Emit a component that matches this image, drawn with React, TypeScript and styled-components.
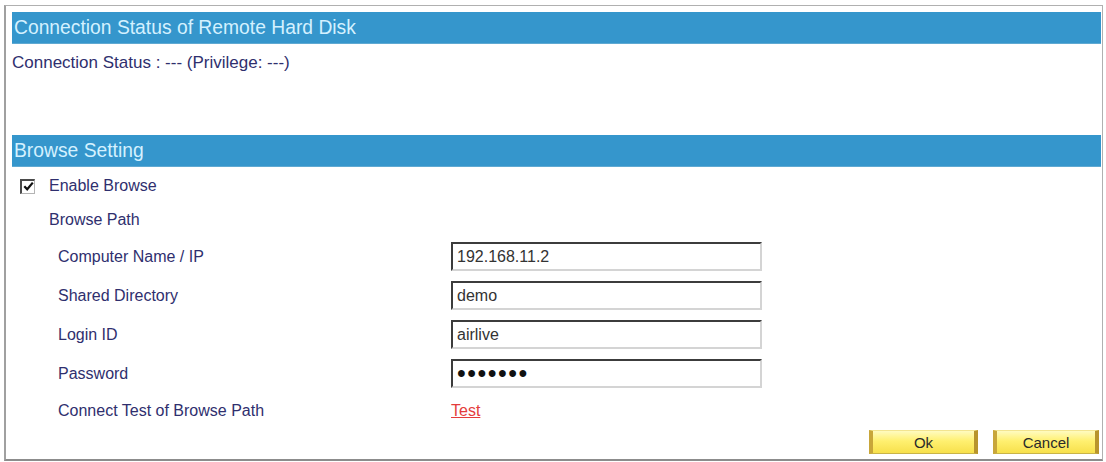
import styled, { createGlobalStyle } from 'styled-components';

const GlobalStyle = createGlobalStyle`
  html, body {
    margin: 0;
    padding: 0;
    background: #ffffff;
  }
  body {
    font-family: 'Liberation Sans', Arial, sans-serif;
  }
`;

interface Field {
  label: string;
  value: string;
  secret?: boolean;
}

const fields: Field[] = [
  { label: 'Computer Name / IP', value: '192.168.11.2' },
  { label: 'Shared Directory', value: 'demo' },
  { label: 'Login ID', value: 'airlive' },
  { label: 'Password', value: '1234567', secret: true },
];

const App = () => {
  return (
    <>
      <GlobalStyle />
      <Frame>
        <SectionHeader>Connection Status of Remote Hard Disk</SectionHeader>
        <StatusBlock>Connection Status : --- (Privilege: ---)</StatusBlock>

        <SectionHeader>Browse Setting</SectionHeader>
        <EnableRow>
          <CheckBox>
            <svg width="11" height="11" viewBox="0 0 11 11">
              <path d="M1.3 5.2 L4.2 8.3 L9.8 1.6" fill="none" stroke="#111" strokeWidth="2.2" />
            </svg>
          </CheckBox>
          <Label>Enable Browse</Label>
        </EnableRow>
        <SubTitle>
          <Label>Browse Path</Label>
        </SubTitle>

        <FieldList>
          {fields.map((f) => (
            <FieldRow key={f.label}>
              <Label>{f.label}</Label>
              <TextInput
                type={f.secret ? 'password' : 'text'}
                defaultValue={f.value}
                $secret={f.secret}
              />
            </FieldRow>
          ))}
          <FieldRow $last>
            <Label>Connect Test of Browse Path</Label>
            <TestLink href="#" onClick={(e) => e.preventDefault()}>
              Test
            </TestLink>
          </FieldRow>
        </FieldList>

        <ButtonBar>
          <YellowButton $width={109}>Ok</YellowButton>
          <YellowButton $width={106}>Cancel</YellowButton>
        </ButtonBar>
      </Frame>
    </>
  );
};

export default App;

const Frame = styled.div`
  box-sizing: border-box;
  margin: 5px 0 0 4px;
  width: 1099px;
  height: 456px;
  padding: 6px 1px 0 6px;
  border: 1px solid #b0b0b0;
  border-left: 2px solid #a0a0a0;
  border-bottom: 2px solid #8c8c8c;
`;

const SectionHeader = styled.div`
  height: 31px;
  line-height: 31px;
  padding-left: 2px;
  background: #3596cc;
  border-bottom: 1px solid #5fa9d2;
  color: #d4f1ff;
  font-size: 19.3px;
  white-space: nowrap;
`;

const StatusBlock = styled.div`
  height: 91px;
  padding-top: 10px;
  box-sizing: border-box;
  line-height: 18px;
  font-size: 17px;
  color: #2f2f6e;
`;

const EnableRow = styled.div`
  display: flex;
  align-items: center;
  gap: 14px;
  height: 34px;
  margin-top: 2px;
  padding-left: 8px;
`;

const CheckBox = styled.span`
  box-sizing: border-box;
  width: 15px;
  height: 15px;
  display: flex;
  align-items: center;
  justify-content: center;
  border-top: 2px solid #4a4a4a;
  border-left: 2px solid #4a4a4a;
  border-right: 1px solid #b4b4b4;
  border-bottom: 1px solid #b4b4b4;
  background: #fff;
`;

const SubTitle = styled.div`
  display: flex;
  align-items: center;
  height: 34px;
  padding-left: 37px;
`;

const Label = styled.span`
  font-size: 16px;
  color: #2f2f6e;
`;

const FieldList = styled.div`
  display: flex;
  flex-direction: column;
`;

const FieldRow = styled.div<{ $last?: boolean }>`
  display: grid;
  grid-template-columns: 393px 311px;
  align-items: center;
  height: ${({ $last }) => ($last ? 36 : 39)}px;
  padding-left: 46px;
`;

const TextInput = styled.input<{ $secret?: boolean }>`
  box-sizing: border-box;
  width: 311px;
  height: 29px;
  margin: 0;
  padding: 0 4px;
  border-top: 2px solid #3c3c3c;
  border-left: 2px solid #3c3c3c;
  border-right: 2px solid #d4d4d4;
  border-bottom: 2px solid #d4d4d4;
  background: #fff;
  color: ${({ $secret }) => ($secret ? '#111' : '#333')};
  font-family: 'Liberation Sans', Arial, sans-serif;
  font-size: ${({ $secret }) => ($secret ? '25px' : '16px')};
  letter-spacing: ${({ $secret }) => ($secret ? '1.5px' : '0')};
  outline: none;
`;

const TestLink = styled.a`
  justify-self: start;
  font-size: 16px;
  color: #e43c3c;
  text-decoration: underline;
`;

const ButtonBar = styled.div`
  display: flex;
  justify-content: flex-end;
  gap: 15px;
  margin-top: 1px;
  padding-right: 2px;
`;

const YellowButton = styled.button<{ $width: number }>`
  box-sizing: border-box;
  width: ${({ $width }) => $width}px;
  height: 24px;
  padding: 0;
  background: linear-gradient(#fffbc0, #fff070 45%, #f7e04c);
  border-top: 1px solid #f3e590;
  border-bottom: 1px solid #c9b448;
  border-left: 4px solid #c8a63a;
  border-right: 4px solid #b8942c;
  color: #2a2a2a;
  font-family: 'Liberation Sans', Arial, sans-serif;
  font-size: 15px;
  cursor: pointer;
`;
